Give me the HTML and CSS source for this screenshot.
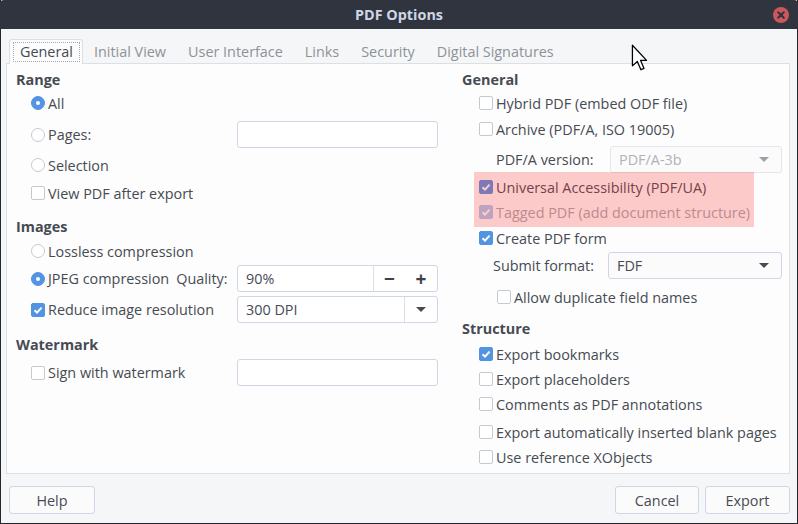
FILE: index.html
```html
<!DOCTYPE html>
<html>
<head>
<meta charset="utf-8">
<link rel="stylesheet" href="styles.css">
</head>
<body>
<div class="window">
  <div class="titlebar">
    <span></span>
    <span class="title">PDF Options</span>
    <span class="close"><svg width="16" height="16" viewBox="0 0 16 16"><circle cx="8" cy="8" r="8" fill="#cc575d"/><path d="M5.2 5.2 L10.8 10.8 M10.8 5.2 L5.2 10.8" stroke="#2f343f" stroke-width="2" stroke-linecap="round"/></svg></span>
  </div>
  <div class="tabs">
    <div class="tab active"><span class="focus">General</span></div>
    <div class="tab">Initial View</div>
    <div class="tab">User Interface</div>
    <div class="tab">Links</div>
    <div class="tab">Security</div>
    <div class="tab">Digital Signatures</div>
  </div>
  <div class="panel">
    <div class="col">
      <div class="row hdr">Range</div>
      <div class="row ind mt2"><span class="rb on"></span><span class="lbl">All</span></div>
      <div class="row ind mt7 entry-row"><span class="rb"></span><span class="lbl">Pages:</span><span class="entry"></span></div>
      <div class="row ind mt6"><span class="rb"></span><span class="lbl">Selection</span></div>
      <div class="row ind mt6"><span class="cb"></span><span class="lbl">View PDF after export</span></div>
      <div class="row hdr mt11">Images</div>
      <div class="row ind mt3"><span class="rb"></span><span class="lbl">Lossless compression</span></div>
      <div class="row ind mt3 entry-row"><span class="rb on"></span><span class="lbl">JPEG compression</span><span class="lbl q">Quality:</span>
        <span class="entry spin"><span class="val">90%</span><span class="sbtn first">−</span><span class="sbtn">+</span></span></div>
      <div class="row ind mt4 entry-row"><span class="cb on"><svg width="14" height="14" viewBox="0 0 14 14"><path d="M3.5 7.2 L6 9.6 L10.6 4.6" fill="none" stroke="#fff" stroke-width="2"/></svg></span><span class="lbl">Reduce image resolution</span>
        <span class="entry combo-e"><span class="val">300 DPI</span><span class="dbtn"><span class="arrow"></span></span></span></div>
      <div class="row hdr mt10">Watermark</div>
      <div class="row ind mt4 entry-row"><span class="cb"></span><span class="lbl">Sign with watermark</span><span class="entry"></span></div>
    </div>
    <div class="col">
      <div class="row hdr">General</div>
      <div class="row rind mt2"><span class="cb"></span><span class="lbl">Hybrid PDF (embed ODF file)</span></div>
      <div class="row rind mt4"><span class="cb"></span><span class="lbl">Archive (PDF/A, ISO 19005)</span></div>
      <div class="row mt6 entry-row sub1"><span class="flabel w114">PDF/A version:</span><span class="combo dis"><span class="val">PDF/A-3b</span><span class="arrow"></span></span></div>
      <div class="hl">
        <div class="row rind2"><span class="cb on"><svg width="14" height="14" viewBox="0 0 14 14"><path d="M3.5 7.2 L6 9.6 L10.6 4.6" fill="none" stroke="#fff" stroke-width="2"/></svg></span><span class="lbl">Universal Accessibility (PDF/UA)</span></div>
        <div class="row rind2 mt3"><span class="cb on dis"><svg width="14" height="14" viewBox="0 0 14 14"><path d="M3.5 7.2 L6 9.6 L10.6 4.6" fill="none" stroke="#fff" stroke-width="2"/></svg></span><span class="lbl disabled">Tagged PDF (add document structure)</span></div>
      </div>
      <div class="row rind"><span class="cb on"><svg width="14" height="14" viewBox="0 0 14 14"><path d="M3.5 7.2 L6 9.6 L10.6 4.6" fill="none" stroke="#fff" stroke-width="2"/></svg></span><span class="lbl">Create PDF form</span></div>
      <div class="row mt3 entry-row sub2"><span class="flabel w115">Submit format:</span><span class="combo wide"><span class="val">FDF</span><span class="arrow"></span></span></div>
      <div class="row sub3 mt7"><span class="cb"></span><span class="lbl">Allow duplicate field names</span></div>
      <div class="row hdr mt9">Structure</div>
      <div class="row rind mt4"><span class="cb on"><svg width="14" height="14" viewBox="0 0 14 14"><path d="M3.5 7.2 L6 9.6 L10.6 4.6" fill="none" stroke="#fff" stroke-width="2"/></svg></span><span class="lbl">Export bookmarks</span></div>
      <div class="row rind mt3"><span class="cb"></span><span class="lbl">Export placeholders</span></div>
      <div class="row rind mt3"><span class="cb"></span><span class="lbl">Comments as PDF annotations</span></div>
      <div class="row rind mt6"><span class="cb"></span><span class="lbl">Export automatically inserted blank pages</span></div>
      <div class="row rind mt3"><span class="cb"></span><span class="lbl">Use reference XObjects</span></div>
    </div>
  </div>
  <div class="buttons">
    <button class="btn help">Help</button>
    <span class="spacer"></span>
    <button class="btn cancel">Cancel</button>
    <button class="btn export">Export</button>
  </div>
  <svg class="cursor" width="17" height="27" viewBox="0 0 13 21"><path d="M1 1 L1 17 L4.8 13.6 L7.6 20 L10 19 L7.3 12.7 L12 12.7 Z" fill="#fff" stroke="#000" stroke-width="1" stroke-linejoin="round"/></svg>
</div>
</body>
</html>
```
FILE: styles.css
```css
* { box-sizing: border-box; }
html, body { margin: 0; padding: 0; }
body {
  width: 798px; height: 524px; overflow: hidden;
  background: #2b2e36;
  font-family: "Open Sans", "Noto Sans", sans-serif;
  font-size: 14.4px;
  color: #464b53;
}
.window {
  position: relative;
  width: 798px; height: 524px;
  display: flex; flex-direction: column;
  background: #f5f6f7;
  border: 1px solid #23262d; border-top: 0;
}
.titlebar {
  height: 29px; margin: 0 -1px;
  background: #2f343f;
  display: grid; grid-template-columns: 1fr auto 1fr; align-items: center;
  border-radius: 4px 4px 0 0;
}
.title { color: #cfd6e6; font-weight: bold; font-size: 14.4px; }
.close { justify-self: end; margin-right: 9px; height: 16px; }
.close svg { display: block; }

.tabs { display: flex; margin: 10px 0 0 8px; height: 25px; position: relative; z-index: 1; }
.tab {
  padding: 0 10px; height: 24px; line-height: 23px;
  color: #8e9297; border: 1px solid transparent; border-bottom: 0;
}
.tab.active {
  background: #fdfdfd; border-color: #dcdfe3; border-radius: 3px 3px 0 0;
  color: #464b53; padding: 2px 2px 0 3px; height: 25px; line-height: normal;
}
.focus { display: block; border: 1px dotted #a4a9ae; padding: 0 6px; height: 20px; line-height: 17px; }

.panel {
  margin: -1px 7px 0 5px; height: 411px;
  border: 1px solid #dcdfe3; background: #fdfdfd;
  display: grid; grid-template-columns: 422px 320px; column-gap: 24px;
  padding: 4px 0 0 9px; align-content: start;
}
.col { display: flex; flex-direction: column; }
.row { display: flex; align-items: center; height: 22px; white-space: nowrap; }
.entry-row { height: 27px; }
.hdr { font-weight: bold; }
.ind { padding-left: 15px; }
.rind { padding-left: 17px; }
.rind2 { padding-left: 5px; }
.sub1 { padding-left: 34px; }
.sub2 { padding-left: 31px; }
.sub3 { padding-left: 35px; }
.mt2 { margin-top: 2px; } .mt3 { margin-top: 3px; } .mt4 { margin-top: 4px; }
.mt6 { margin-top: 6px; } .mt7 { margin-top: 7px; } .mt9 { margin-top: 9px; }
.mt10 { margin-top: 10px; } .mt11 { margin-top: 11px; }
.lbl { margin-left: 3px; }
.lbl.q { margin-left: 7px; }
.disabled { color: #a6aab0; }
.flabel { flex: none; }
.w114 { width: 114px; } .w115 { width: 115px; }

.cb, .rb {
  flex: none; width: 14px; height: 14px;
  border: 1px solid #c5cad2; background: #fff;
  display: inline-flex; align-items: center; justify-content: center;
}
.cb { border-radius: 2px; }
.cb svg { display: block; margin: -1px; }
.cb.on { background: #5294e2; border-color: #5294e2; }
.cb.on.dis { background: #a9c9f0; border-color: #a9c9f0; }
.rb { border-radius: 50%; }
.rb.on { background: #5294e2; border-color: #5294e2; }
.rb.on::after { content: ""; width: 4px; height: 4px; border-radius: 50%; background: #fff; }

.entry {
  margin-left: auto; width: 201px; height: 27px; flex: none;
  border: 1px solid #cfd6e6; border-radius: 3px; background: #fff;
  display: flex; align-items: stretch;
}
.entry .val { flex: 1; padding-left: 8px; display: flex; align-items: center; }
.sbtn { width: 32px; display: flex; align-items: center; justify-content: center; font-size: 19px; font-weight: bold; color: #3d4148; }
.sbtn.first { border-left: 1px solid #dcdfe3; }
.dbtn { width: 33px; border-left: 1px solid #dcdfe3; display: flex; align-items: center; justify-content: center; }
.arrow { width: 0; height: 0; border-left: 5px solid transparent; border-right: 5px solid transparent; border-top: 5px solid #464b53; }

.combo {
  width: 172px; height: 27px; flex: none;
  border: 1px solid #cfd6e6; border-radius: 3px; background: #fbfbfc;
  display: flex; align-items: center; padding: 0 12px 0 8px;
}
.combo.wide { width: 174px; }
.combo .val { flex: 1; }
.combo.dis { border-color: #e3e6ea; color: #aeb2b8; background: #fbfbfc; }
.combo.dis .arrow { border-top-color: #9da1a7; }

.hl {
  position: relative; margin: -1px 0 0 12px; width: 280px;
  padding: 4px 0 4px 0; height: 55px;
}
.hl::after {
  content: ""; position: absolute; inset: 0;
  background: rgba(255, 40, 40, 0.24); pointer-events: none;
}

.buttons { display: flex; padding: 12px 7px 0 8px; gap: 6px; }
.spacer { flex: 1; }
.btn {
  height: 28px; border: 1px solid #cfd6e6; border-radius: 3px; background: #fbfbfc;
  font-family: inherit; font-size: 14.4px; color: #464b53; padding: 0;
}
.help { width: 86px; } .cancel { width: 84px; } .export { width: 85px; }

.cursor { position: absolute; left: 630px; top: 44px; }
```
